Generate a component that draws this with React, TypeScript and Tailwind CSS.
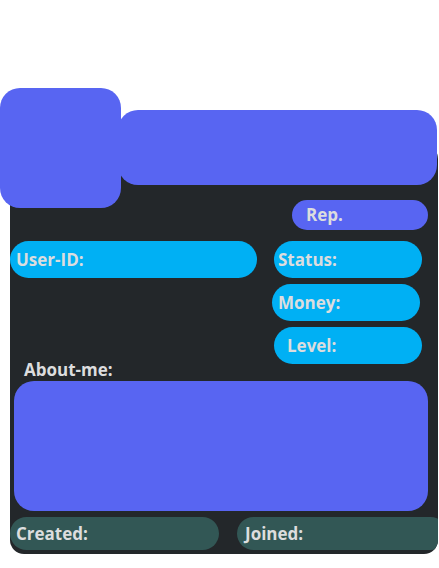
export default function App() {
  const label = "font-['Open_Sans',sans-serif] font-bold text-[17px] text-[#dcddde]";

  return (
    <div className="relative w-[439px] h-[568px] bg-white overflow-hidden">
      {/* avatar */}
      <div className="absolute left-0 top-[88px] w-[121px] h-[120px] rounded-[20px] bg-[#5865f2] z-20" />

      <div className="pt-[110px] pl-[10px] pr-[1px]">
        <div className="relative z-10 ml-[108px] mr-[1px] h-[75px] rounded-[20px] bg-[#5865f2]" />

        <div className="-mt-[40px] pt-[40px] bg-[#23272a] rounded-[14px] overflow-hidden pb-[4px]">
          <div className="flex justify-end mt-[15px] pr-[10px]">
            <div className={`w-[136px] h-[30px] rounded-full bg-[#5865f2] pl-[14px] flex items-center ${label}`}>
              Rep.
            </div>
          </div>

          <div className="flex mt-[11px]">
            <div className={`w-[247px] h-[37px] shrink-0 rounded-full bg-[#00b0f4] pl-[6px] flex items-center ${label}`}>
              User-ID:
            </div>
            <div className="flex flex-col gap-[6px] ml-[17px]">
              <div className={`w-[148px] h-[37px] rounded-full bg-[#00b0f4] pl-[4px] flex items-center ${label}`}>
                Status:
              </div>
              <div className={`-ml-[2px] w-[148px] h-[37px] rounded-full bg-[#00b0f4] pl-[6px] flex items-center ${label}`}>
                Money:
              </div>
              <div className={`w-[148px] h-[37px] rounded-full bg-[#00b0f4] pl-[13px] flex items-center ${label}`}>
                Level:
              </div>
            </div>
          </div>

          <div className={`-mt-[6px] pl-[14px] leading-[23px] ${label}`}>About-me:</div>

          <div className="ml-[4px] mr-[10px] h-[130px] rounded-[20px] bg-[#5865f2]" />

          <div className="flex mt-[6px]">
            <div className={`w-[209px] h-[33px] shrink-0 rounded-full bg-[#325755] pl-[6px] flex items-center ${label}`}>
              Created:
            </div>
            <div className={`ml-[18px] w-[210px] h-[33px] shrink-0 rounded-full bg-[#325755] pl-[8px] flex items-center ${label}`}>
              Joined:
            </div>
          </div>
        </div>
      </div>
    </div>
  );
}
